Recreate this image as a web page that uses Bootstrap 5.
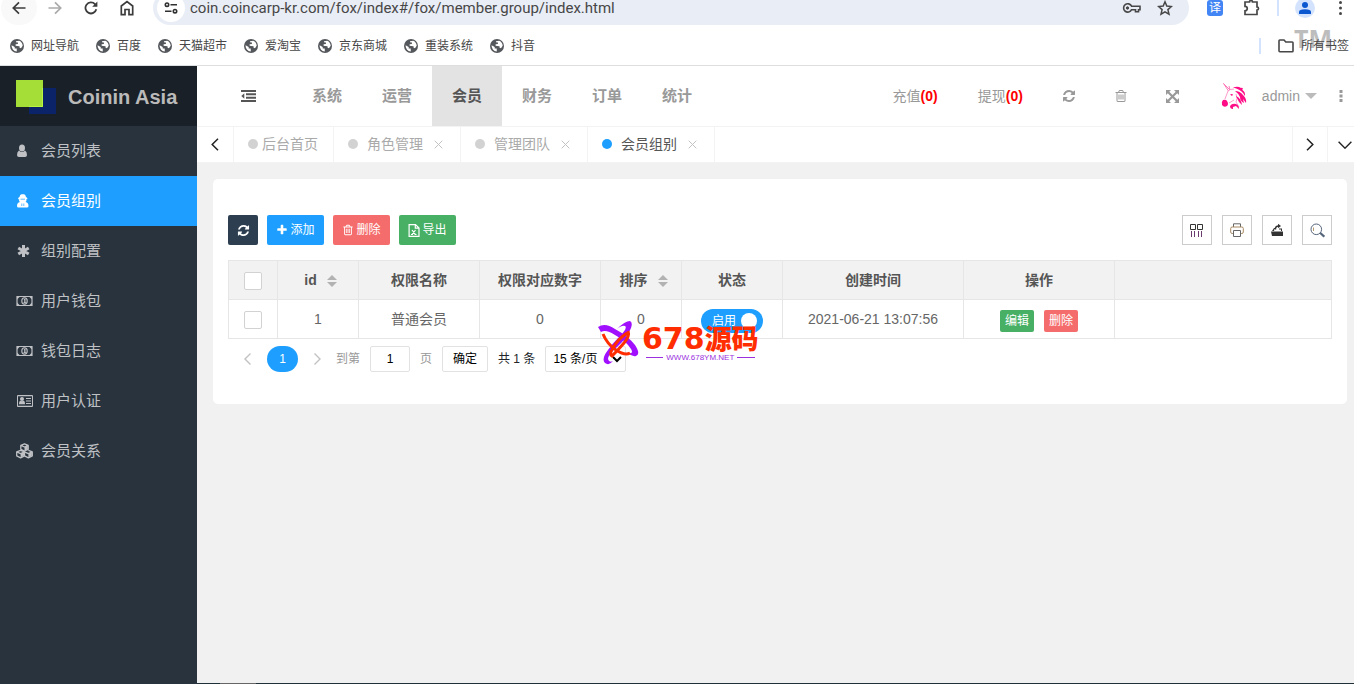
<!DOCTYPE html>
<html lang="zh-CN">
<head>
<meta charset="utf-8">
<meta name="viewport" content="width=device-width, initial-scale=1">
<title>Coinin Asia</title>
<link href="https://cdn.jsdelivr.net/npm/bootstrap@5.3.0/dist/css/bootstrap.min.css" rel="stylesheet">
<style>
body{font-family:"Liberation Sans","Noto Sans CJK SC",sans-serif;font-size:14px;line-height:20px;color:#666;background:#f1f1f1}
a{text-decoration:none;color:inherit}
button{background:none;border:0;padding:0;color:inherit}
svg{display:block;flex:none}
/* browser bar */
.chrome-bar{background:#fff;border-bottom:1px solid #dcdee0;height:66px;overflow:hidden;color:#474747}
.tool-line{height:34px;margin-top:-9px;padding-left:1px}
.nav-btn{width:36px;height:34px;display:flex;align-items:center;justify-content:center}
.back-btn{background:#f9f9f9;border-radius:17px}
.pill{background:#e9edf6;border-radius:17px;height:34px;min-width:0;margin-right:2px}
.site-info{width:28px;height:28px;border-radius:14px;background:#fff}
.url-box{border:0;background:none;outline:0;padding:0;height:24px;margin-left:5px;font:15px/24px Roboto,sans-serif;color:#474747;min-width:0}
.trans{width:16px;height:16px;border-radius:3px;background:#4285f4;color:#fff;font-size:12px;line-height:16px}
.sep{width:2px;height:16px;background:#d3e3fd}
.person{width:20px;height:20px;border-radius:10px;background:#d3e3fd}
.marks{height:40px;font-size:12px;padding:1px 5px 0 10px;gap:17px}
.marks a{display:flex;align-items:center;gap:7px;white-space:nowrap}
.tm{position:absolute;right:22px;top:26px;font:bold 25px/25px "Open Sans",sans-serif;color:#bdbdbd;z-index:0}
.marks a,.marks .sep{position:relative;z-index:1}
/* shell */
.shell{min-height:calc(100vh - 66px)}
.side{width:197px;background:#28333e;color:#bfc1c4;flex:none}
.brand{height:60px;background:#1a2027;padding:2px 0 0 16px;gap:12px;font-size:20px;font-weight:700;color:#bababa}
.side a.item{display:flex;align-items:center;height:50px;padding-left:16px;gap:8px;font-size:15px}
.side a.item.on{background:#1e9fff;color:#fff}
.side .item svg{width:17px;height:16px}
.head{height:60px;background:#fff;color:#999}
.fold{width:95px;padding-left:7px;color:#555}
.top-menu a{display:flex;align-items:center;padding:0 20px;font-size:15px;font-weight:700}
.top-menu a.on{background:#e3e3e3;color:#555}
.top-tools a,.top-tools button{display:flex;align-items:center;justify-content:center;white-space:nowrap;padding:0 20px}
.top-tools button{width:52px;padding:0}
.top-tools b{color:#f00}
.top-tools a.user{padding:0 11px 0 22px}
.user-name{margin-left:15px}
.caret{border:6px solid transparent;border-top-color:#bbb;border-bottom:0;margin-left:5px}
.top-tools button.more{width:26px}
.tab-line{height:37px;background:#fff;border-top:1px solid #f3f3f3;border-bottom:1px solid #f3f3f3;color:#aaa;overflow:hidden}
.step{width:37px;border-right:1px solid #f3f3f3;color:#222;display:flex;align-items:center;justify-content:center}
.step.end{width:35px;border-right:0;border-left:1px solid #f3f3f3}
.step.last{width:27px;justify-content:flex-start;padding-left:10px}
.tab-item{display:flex;align-items:center;padding:0 17px 2px 14px;gap:9px;border-right:1px solid #f3f3f3}
.tab-item.home{padding-right:15px;gap:4px}
.tab-item.on{color:#555}
.tab-item i{width:10px;height:10px;border-radius:5px;background:#d2d2d2}
.tab-item.on i{background:#1e9fff}
.tab-item button{color:#c2c2c2;padding-top:2px;margin-left:2px}
/* content */
.panel{background:#fff;border-radius:5px;margin:16px 7px 0 16px;padding:36px 15px 32px}
.act{height:30px;border-radius:2px;color:#fff;font-size:12px;display:flex;align-items:center;justify-content:center;gap:2px;width:57px}
.act.sq{width:30px;background:#2c3e50}
.blue{background:#1e9fff}.red{background:#f56c6c}.green{background:#47b065}
.mini{width:30px;height:30px;border:1px solid #ccc;color:#333;display:flex;align-items:center;justify-content:center}
.grid-table{table-layout:fixed;width:100%;border-collapse:collapse;margin:15px 0 7px}
.grid-table th,.grid-table td{border:1px solid #e6e6e6;height:39px;padding:0;text-align:center;vertical-align:middle;white-space:nowrap}
.grid-table th{background:#f2f2f2;color:#555;font-weight:700}
.tick{appearance:none;width:18px;height:18px;border:1px solid #d2d2d2;border-radius:2px;background:#fff;display:block;margin:2px auto 0}
.sort{display:inline-flex;flex-direction:column;gap:2px;margin:0 -5px 0 10px;vertical-align:middle}
.sort::before,.sort::after{content:"";border:5px solid transparent}
.sort::before{border-top:0;border-bottom-color:#b2b2b2}
.sort::after{border-bottom:0;border-top-color:#b2b2b2}
.toggle{display:inline-flex;align-items:center;justify-content:space-between;width:62px;height:24px;border-radius:12px;background:#1e9fff;color:#fff;font-size:12px;padding:0 6px 0 11px;margin-top:3px;vertical-align:middle}
.toggle input{appearance:none;width:16px;height:16px;border-radius:8px;background:#fff;margin:0}
.row-act{height:22px;width:34px;border-radius:2px;color:#fff;font-size:12px;line-height:22px;margin:3px 5px 0 0}
.row-act+.row-act{margin:3px 0 0 5px}
.pager{font-size:12px;height:26px;color:#999}
.pager button,.pager input,.pager select{height:26px;border:1px solid #e2e2e2;border-radius:2px;background:#fff;color:#000;font-size:12px}
.pager button.arrow{border:0;width:39px;color:#c2c2c2;display:flex;align-items:center;justify-content:center}
.pager button.cur{background:#1e9fff;color:#fff;border:0;border-radius:13px;width:31px}
.pager button.arrow.next{width:38px}
.pager label{gap:10px}
.pager input{width:40px;text-align:center}
.pager .go{width:46px;margin:0 10px}
.pager select{width:81px;padding:0 2px 0 3px;margin-left:10px}
.ledge{height:1px;background:#203038}
.ledge span{width:36px;height:1px;margin-left:23px;background:#666}
/* floating seal */
.seal{position:absolute;left:384px;top:140px;gap:2px;pointer-events:none}
.seal-name{color:#ff2d00;font:bold 30px/30px "DejaVu Sans",sans-serif;white-space:nowrap}
.seal-name span{font:900 27px/30px "Noto Sans CJK SC",sans-serif}
.seal-site{color:#9b30e0;font-size:8px;line-height:8px;gap:3px;padding:0 4px}
.seal-site::before,.seal-site::after{content:"";height:1px;background:#9b30e0;flex:1}
</style>
</head>
<body>
<svg width="0" height="0" class="position-absolute" aria-hidden="true">
<symbol id="globe" viewBox="0 0 14 14"><circle cx="7" cy="7" r="7" fill="#54575b"/><path d="M1.600 6.300 4.700 8v1.400l2 .2.1 2.900A5.600 5.600 0 0 1 1.600 6.300zM6 2.200l3.300-.5c2 .9 3.200 2.700 3.400 5L11 9.300 9.600 8.800 9.500 7.300 7.200 7 5.600 6.700V5.300L7.900 5V3.600L6 3.300z" fill="#fff"/></symbol>
<symbol id="refresh" viewBox="0 0 1792 1792"><path fill="currentColor" d="M1639 1056q0 5-1 7-64 268-268 434.500t-478 166.500q-146 0-282.500-55t-243.500-157l-129 129q-19 19-45 19t-45-19-19-45v-448q0-26 19-45t45-19h448q26 0 45 19t19 45-19 45l-137 137q71 66 161 102t187 36q134 0 250-65t186-179q11-17 53-117 8-23 30-23h192q13 0 22.500 9.500t9.500 22.500zm25-800v448q0 26-19 45t-45 19h-448q-26 0-45-19t-19-45 19-45l138-138q-148-137-349-137-134 0-250 65t-186 179q-11 17-53 117-8 23-30 23h-199q-13 0-22.500-9.500t-9.500-22.500v-7q65-268 270-434.500t480-166.500q146 0 284 55.500t245 156.500l130-129q19-19 45-19t45 19 19 45z"/></symbol>
<symbol id="trash" viewBox="0 0 1792 1792"><path fill="currentColor" d="M704 736v576q0 14-9 23t-23 9h-64q-14 0-23-9t-9-23v-576q0-14 9-23t23-9h64q14 0 23 9t9 23zm256 0v576q0 14-9 23t-23 9h-64q-14 0-23-9t-9-23v-576q0-14 9-23t23-9h64q14 0 23 9t9 23zm256 0v576q0 14-9 23t-23 9h-64q-14 0-23-9t-9-23v-576q0-14 9-23t23-9h64q14 0 23 9t9 23zm128 724v-948h-896v948q0 22 7 40.500t14.500 27 10.500 8.500h832q3 0 10.500-8.500t14.500-27 7-40.500zm-672-1076h448l-48-117q-7-9-17-11h-317q-10 2-17 11zm928 32v64q0 14-9 23t-23 9h-96v948q0 83-47 143.500t-113 60.500h-832q-66 0-113-58.500t-47-141.500v-952h-96q-14 0-23-9t-9-23v-64q0-14 9-23t23-9h309l70-167q15-37 54-63t79-26h320q40 0 79 26t54 63l70 167h309q14 0 23 9t9 23z"/></symbol>
<symbol id="money" viewBox="0 0 17 16"><path fill="none" stroke="currentColor" stroke-width="1.200" d="M1 3.500h15v9H1z"/><path fill="currentColor" d="M1 3.500h3L1 6.500zM16 3.500h-3l3 3zM1 12.500h3l-3-3zM16 12.500h-3l3-3zM7.600 6.500l1-.8h.9v3.600h.7v.9H7.500v-.9h.7V7z"/><ellipse cx="8.500" cy="8" rx="2.700" ry="3.200" fill="none" stroke="currentColor" stroke-width="1.100"/></symbol>
<symbol id="cross" viewBox="0 0 9 9"><path d="m.7.7 7.600 7.600M8.300.7.7 8.300" stroke="currentColor" fill="none"/></symbol>
</svg>

<header class="chrome-bar position-relative">
  <div class="tool-line d-flex align-items-center">
    <button class="nav-btn back-btn" aria-label="后退"><svg width="14" height="14" viewBox="0 0 14 14" fill="none" stroke="#3c3c3c" stroke-width="1.700"><path d="M13.500 7H1.500M7 1.300 1.300 7 7 12.700"/></svg></button>
    <button class="nav-btn" aria-label="前进"><svg width="14" height="14" viewBox="0 0 14 14" fill="none" stroke="#aaa" stroke-width="1.700"><path d="M.5 7h12M7 1.300 12.700 7 7 12.700"/></svg></button>
    <button class="nav-btn" aria-label="刷新"><svg width="14" height="14" viewBox="0 0 14 14" fill="none" stroke="#3c3c3c" stroke-width="1.800"><path d="M12.300 8.300A5.500 5.500 0 1 1 11 3.200l1.300 1.300"/><path d="M13.400.5v5.200H8.200z" fill="#3c3c3c" stroke="none"/></svg></button>
    <button class="nav-btn" aria-label="主页"><svg width="14" height="16" viewBox="0 0 14 16" fill="none" stroke="#3c3c3c" stroke-width="1.700"><path d="M1.300 6 7 1.500 12.700 6v8.700H9V9.500H5v5.200H1.300z"/></svg></button>
    <div class="pill d-flex align-items-center flex-grow-1 ms-2 ps-1 pe-3">
      <button class="site-info d-flex align-items-center justify-content-center" aria-label="网站信息"><svg width="14" height="12" viewBox="0 0 14 12" fill="none" stroke="#303030" stroke-width="1.600"><circle cx="3" cy="2.700" r="1.700"/><path d="M6.500 2.700H13M1 9.200h6.500"/><circle cx="11" cy="9.200" r="1.700"/></svg></button>
      <input class="url-box flex-grow-1" aria-label="网址" value="coin.coincarp-kr.com/fox/index#/fox/member.group/index.html">
      <button aria-label="密码"><svg width="19" height="12" viewBox="0 0 19 12" fill="none" stroke="#474747" stroke-width="1.600"><path d="M9.600 4.200H18v3.500h-1.500v2h-3v-2H9.600a4.200 4.200 0 1 1 0-3.500z"/><circle cx="5.500" cy="6" r="1.200" fill="#474747" stroke-width="1"/></svg></button>
      <button class="ms-3" aria-label="收藏"><svg width="16" height="16" viewBox="0 0 16 16" fill="none" stroke="#474747" stroke-width="1.500"><path d="m8 1.800 1.800 4.300 4.600.4-3.500 3.100 1.100 4.600L8 11.800l-4 2.400 1.100-4.600-3.500-3.100 4.600-.4z"/></svg></button>
    </div>
    <button class="trans mx-3 flex-shrink-0" aria-label="翻译">译</button>
    <button class="ms-1" aria-label="扩展程序"><svg width="18" height="18" viewBox="0 0 18 18" fill="none" stroke="#474747" stroke-width="1.700"><path d="M2 3h4.500a1.500 1.500 0 0 1 3 0H14v5a1.500 1.500 0 0 1 0 3v4.500H2V11.800a2.200 2.200 0 0 0 0-4.500z"/></svg></button>
    <span class="sep mx-3"></span>
    <button class="person d-flex align-items-center justify-content-center" aria-label="用户"><svg width="12" height="12" viewBox="0 0 12 12" fill="#0b57d0"><circle cx="6" cy="3" r="3"/><path d="M0 12V9.800Q0 7.300 6 7.300t6 2.500V12z"/></svg></button>
    <button class="ms-4 me-2 pe-1" aria-label="菜单"><svg width="3" height="16" viewBox="0 0 3 16" fill="#474747"><circle cx="1.500" cy="2.500" r="1.500"/><circle cx="1.500" cy="8" r="1.500"/><circle cx="1.500" cy="13.500" r="1.500"/></svg></button>
  </div>
  <span class="tm">TM</span>
  <nav class="marks d-flex align-items-center" aria-label="书签">
    <a href="#"><svg width="14" height="14"><use href="#globe"/></svg>网址导航</a>
    <a href="#"><svg width="14" height="14"><use href="#globe"/></svg>百度</a>
    <a href="#"><svg width="14" height="14"><use href="#globe"/></svg>天猫超市</a>
    <a href="#"><svg width="14" height="14"><use href="#globe"/></svg>爱淘宝</a>
    <a href="#"><svg width="14" height="14"><use href="#globe"/></svg>京东商城</a>
    <a href="#"><svg width="14" height="14"><use href="#globe"/></svg>重装系统</a>
    <a href="#"><svg width="14" height="14"><use href="#globe"/></svg>抖音</a>
    <span class="sep ms-auto"></span>
    <a href="#"><svg width="16" height="14" viewBox="0 0 16 14" fill="none" stroke="#474747" stroke-width="1.600"><path d="M1 11.800V1.800Q1 1 1.800 1H6l1.800 2h6.400q.8 0 .8.800v8.200q0 .8-.8.800H1.800q-.8 0-.8-1z"/></svg>所有书签</a>
  </nav>
</header>

<div class="shell d-flex">
  <aside class="side">
    <div class="brand d-flex align-items-center"><svg width="40" height="34" viewBox="0 0 40 34"><path fill="#0b2368" d="M13 8h27v26H13z"/><path fill="#a5de37" d="M0 0h27v27H0z"/><path fill="none" stroke="#b9f442" d="M13 26.500h13.500V8"/></svg>Coinin Asia</div>
    <nav>
      <a class="item" href="#"><svg viewBox="0 0 17 16" fill="currentColor"><ellipse cx="6" cy="5" rx="3" ry="3.500"/><path d="M3 7.500Q6 10.500 9 7.500q2 1 2 4.500 0 2-2 2H3q-2 0-2-2 0-3.500 2-4.500z"/></svg>会员列表</a>
      <a class="item on" href="#"><svg viewBox="0 0 17 16" fill="currentColor"><path d="M3.500 4Q4 1.300 5.500 1.300H8Q9.500 1.300 10 4l1.300 1v1.200h-1Q11 8.500 9.500 9q3 .5 3 4 0 1.500-1.500 1.500H2.500Q1 14.500 1 13q0-3.500 3-4-1.500-.5-.8-2.800h-1V5z"/><path d="M4.500 6.200h4.500M5.800 10.500v2.500M7.800 10.500v2.500" stroke="#1e9fff" stroke-width=".7"/></svg>会员组别</a>
      <a class="item" href="#"><svg viewBox="0 0 17 16" stroke="currentColor" stroke-width="3"><path d="M7.500 2v12M2.300 5l10.400 6M12.700 5 2.300 11"/></svg>组别配置</a>
      <a class="item" href="#"><svg><use href="#money"/></svg>用户钱包</a>
      <a class="item" href="#"><svg><use href="#money"/></svg>钱包日志</a>
      <a class="item" href="#"><svg viewBox="0 0 17 16" fill="currentColor"><path d="M2 2h14q1 0 1 1v10q0 1-1 1H2q-1 0-1-1V3q0-1 1-1zm0 1.200v9.500h14V3.200z" fill-rule="evenodd"/><circle cx="6" cy="6" r="2"/><path d="M3 11.300q0-3.300 1.500-3.500Q6 8.700 7.500 7.800 9 8 9 11.300zM10 5h5v1h-5zm0 2.500h5v1h-5zm0 2.500h5v1h-5z"/></svg>用户认证</a>
      <a class="item" href="#"><svg viewBox="0 0 17 16" fill="none" stroke="currentColor" stroke-width="1.300" stroke-linejoin="round"><path d="m8.500.8 3.700 1.600v4L8.500 8 4.800 6.400v-4zM4.800 2.400 8.500 4l3.700-1.600M4.600 7.300l3.900 1.600v4l-3.900 2-3.900-2v-4zM.7 8.900l3.900 1.700 3.900-1.700M12.400 7.300l3.900 1.600v4l-3.900 2-3.900-2M8.500 8.900l3.900 1.700 3.900-1.700"/><path fill="currentColor" d="M8.500 4v3.700l3.300-1.500v-4zM4.600 10.600v4l3.500-2V9zM12.400 10.600v4l3.500-2V9z" stroke="none"/></svg>会员关系</a>
    </nav>
  </aside>

  <div class="flex-grow-1 d-flex flex-column position-relative overflow-hidden">
    <div class="head d-flex">
      <button class="fold d-flex align-items-center justify-content-center" aria-label="收起菜单"><svg width="15" height="12" viewBox="0 0 15 12" fill="currentColor"><path d="M0 0h15v2H0zm5 3.300h10v2H5zm0 3.400h10v2H5zM0 10h15v2H0zM3.300 3.300v5.400L.3 6z"/></svg></button>
      <nav class="top-menu d-flex">
        <a href="#">系统</a><a href="#">运营</a><a class="on" href="#">会员</a><a href="#">财务</a><a href="#">订单</a><a href="#">统计</a>
      </nav>
      <div class="top-tools d-flex ms-auto">
        <a href="#">充值<b>(0)</b></a>
        <a href="#">提现<b>(0)</b></a>
        <button aria-label="刷新"><svg width="14" height="14"><use href="#refresh"/></svg></button>
        <button aria-label="清除缓存"><svg width="14" height="14"><use href="#trash"/></svg></button>
        <button aria-label="全屏"><svg width="13" height="13" viewBox="0 0 13 13" fill="currentColor"><path d="M0 0h5L0 5zM13 0v5L8 0zM0 13V8l5 5zM13 13H8l5-5z"/><path d="m2 2 9 9M11 2l-9 9" stroke="currentColor" stroke-width="2.200"/></svg></button>
        <a class="user" href="#"><svg width="26" height="28" viewBox="0 0 26 28"><path d="M2.500 1.500 7.500 9M2.500 1.500 9 8M8 4l1 4" stroke="#ff6db3" stroke-width=".9" fill="none"/><path d="M7 9q2-2 6-2M7 9l-3 8M13 18l-5 3M15 12q2 5 0 8l3 5" fill="none" stroke="#ff8fc4" stroke-width=".9"/><path d="M2 18q3-1 4 1 2 3 0 5-3 2-5-1-1-3 1-5zM12 5.500q5-1.500 8 .5 1-.5 2 .5-1 .5-.5 1.500 3 2 2.500 6l-2-3q-3-4-10-5.500zM14 9q5 0 8 4 4 4 3 8l-3-4 1 4q-4-2-4-6-1-3-5-6zM15 14q5 2 6 9l-3-3zM9 24q2-3 6-2 3 1 3 5l-3-3-3 1v2q-3 0-3-3z" fill="#ff0d86"/><path d="M9 12.500q2-1 3 0l-1 1.500z" fill="#ff0d86"/></svg><span class="user-name">admin</span><span class="caret"></span></a>
        <button class="more" aria-label="更多"><svg width="4" height="12" viewBox="0 0 4 12" fill="currentColor"><path d="M.5 0h3v3h-3zm0 4.500h3v3h-3zm0 4.500h3v3h-3z"/></svg></button>
      </div>
    </div>
    <div class="tab-line d-flex">
      <button class="step" aria-label="向左"><svg width="8" height="13" viewBox="0 0 8 13" fill="none" stroke="currentColor" stroke-width="1.500"><path d="M7 .8 1.200 6.500 7 12.200"/></svg></button>
      <a class="tab-item home" href="#"><i></i>后台首页</a>
      <div class="tab-item"><i></i><a href="#">角色管理</a><button aria-label="关闭"><svg width="9" height="9"><use href="#cross"/></svg></button></div>
      <div class="tab-item"><i></i><a href="#">管理团队</a><button aria-label="关闭"><svg width="9" height="9"><use href="#cross"/></svg></button></div>
      <div class="tab-item on"><i></i><a href="#">会员组别</a><button aria-label="关闭"><svg width="9" height="9"><use href="#cross"/></svg></button></div>
      <button class="step end ms-auto" aria-label="向右"><svg width="8" height="13" viewBox="0 0 8 13" fill="none" stroke="currentColor" stroke-width="1.500"><path d="m1 .8 5.800 5.700L1 12.200"/></svg></button>
      <button class="step end last" aria-label="展开"><svg width="14" height="8" viewBox="0 0 14 8" fill="none" stroke="currentColor" stroke-width="1.400"><path d="m.6.8 6.400 6.400L13.400.8"/></svg></button>
    </div>

    <main class="panel position-relative">
      <div class="d-flex align-items-center">
        <div class="d-flex" style="gap:9px">
          <button class="act sq" aria-label="刷新"><svg width="13" height="13"><use href="#refresh"/></svg></button>
          <button class="act blue"><svg width="12" height="12" viewBox="0 0 1792 1792"><path fill="currentColor" d="M1600 736v192q0 40-28 68t-68 28h-416v416q0 40-28 68t-68 28h-192q-40 0-68-28t-28-68v-416h-416q-40 0-68-28t-28-68v-192q0-40 28-68t68-28h416v-416q0-40 28-68t68-28h192q40 0 68 28t28 68v416h416q40 0 68 28t28 68z"/></svg>添加</button>
          <button class="act red"><svg width="12" height="12"><use href="#trash"/></svg>删除</button>
          <button class="act green"><svg width="12" height="13" viewBox="0 0 12 13" fill="none" stroke="currentColor" stroke-width="1.200"><path d="M1.100.6h6.400L11 4v8.400H1.100zM7.300.6v3.600H11"/><path d="m4 6 3.500 4.500M7.500 6 4 10.500M3 10.500h2M6.500 10.500h2"/></svg>导出</button>
        </div>
        <div class="d-flex ms-auto" style="gap:10px">
          <button class="mini" aria-label="筛选列"><svg width="14" height="14" viewBox="0 0 14 14" fill="none" stroke="currentColor"><path d="M.5 1.500h5v5h-5zM7.500 1.500h5v5h-5z"/><path d="M1.500 8v6M4.500 8v6M8.500 8v6M11.500 8v6" stroke="#6b3b6f"/></svg></button>
          <button class="mini" aria-label="打印"><svg width="14" height="14" viewBox="0 0 14 14" fill="none" stroke="#666"><path d="M3.500 4V.8h7V4"/><rect x=".7" y="4" width="12.600" height="6.500" rx="1.500" stroke="#a88960"/><path d="M3.500 7.500h7v6h-7z" fill="#fff"/></svg></button>
          <button class="mini" aria-label="导出"><svg width="14" height="14" viewBox="0 0 14 14" fill="currentColor"><path d="M1 8.500h12V13H2zM2 8l2-3h2v1H4.500L4 8zM12 5.500V8h-1V6.500H9v-1z"/><path d="M5.500 6.500Q5 3 9 3" fill="none" stroke="currentColor" stroke-width="1.500"/><path d="M8 .8 11 3 8 5.200z"/></svg></button>
          <button class="mini" aria-label="搜索"><svg width="15" height="15" viewBox="0 0 15 15" fill="none" stroke="#55657a"><circle cx="6.300" cy="6.300" r="5.300"/><path d="M3.500 4.500v3.500" stroke="#b79b6a"/><path d="m10.300 10 4 3.700" stroke-width="2.200"/></svg></button>
        </div>
      </div>

      <table class="grid-table">
        <colgroup><col style="width:49px"><col style="width:81px"><col style="width:121px"><col style="width:121px"><col style="width:81px"><col style="width:101px"><col style="width:181px"><col style="width:151px"><col></colgroup>
        <thead><tr>
          <th><input class="tick" type="checkbox" aria-label="全选"></th><th>id<span class="sort"></span></th><th>权限名称</th><th>权限对应数字</th><th>排序<span class="sort"></span></th><th>状态</th><th>创建时间</th><th>操作</th><th></th>
        </tr></thead>
        <tbody><tr>
          <td><input class="tick" type="checkbox" aria-label="选择"></td><td>1</td><td>普通会员</td><td>0</td><td>0</td>
          <td><label class="toggle">启用<input type="checkbox" role="switch" checked></label></td>
          <td>2021-06-21 13:07:56</td>
          <td><button class="row-act green">编辑</button><button class="row-act red">删除</button></td><td></td>
        </tr></tbody>
      </table>

      <div class="pager d-flex align-items-center">
        <button class="arrow" aria-label="上一页"><svg width="7" height="12" viewBox="0 0 7 12" fill="none" stroke="currentColor" stroke-width="1.400"><path d="M6.500.6 1 6l5.500 5.400"/></svg></button>
        <button class="cur">1</button>
        <button class="arrow next" aria-label="下一页"><svg width="7" height="12" viewBox="0 0 7 12" fill="none" stroke="currentColor" stroke-width="1.400"><path d="M.5.6 6 6 .5 11.400"/></svg></button>
        <label class="d-flex align-items-center">到第<input type="text" value="1">页</label>
        <button class="go">确定</button>
        <span class="text-dark">共 1 条</span>
        <select aria-label="每页条数"><option>15 条/页</option></select>
      </div>

      <div class="seal d-flex align-items-center">
        <svg width="43" height="46" viewBox="0 0 43 46"><path fill="#a010ff" d="M1 8Q8 3 18 10 31 17 38 26q6 9 1 11-4 1-8-3 6 1 3-4-5-8-16-14Q9 10 4 13zM33 2q4 2-1 11-4 8-12 15-9 8-9 12 1 4 5 2-4 5-8 2-4-4 3-13 4-6 11-13Q31 9 28 7q-3-1-8 3 8-8 13-8z"/><path d="M6 15q4 10 13 16 9 6 14 3M31 12q2 5-4 12-7 8-12 13-3-2 1-8 5-9 14-15" stroke="#ff2d00" stroke-width="3" fill="none"/></svg>
        <div><div class="seal-name">678<span>源码</span></div><div class="seal-site d-flex align-items-center">WWW.678YM.NET</div></div>
      </div>
    </main>
    <div class="ledge mt-auto"><span class="d-block"></span></div>
  </div>
</div>
<script src="https://cdn.jsdelivr.net/npm/bootstrap@5.3.0/dist/js/bootstrap.bundle.min.js"></script>
</body>
</html>
